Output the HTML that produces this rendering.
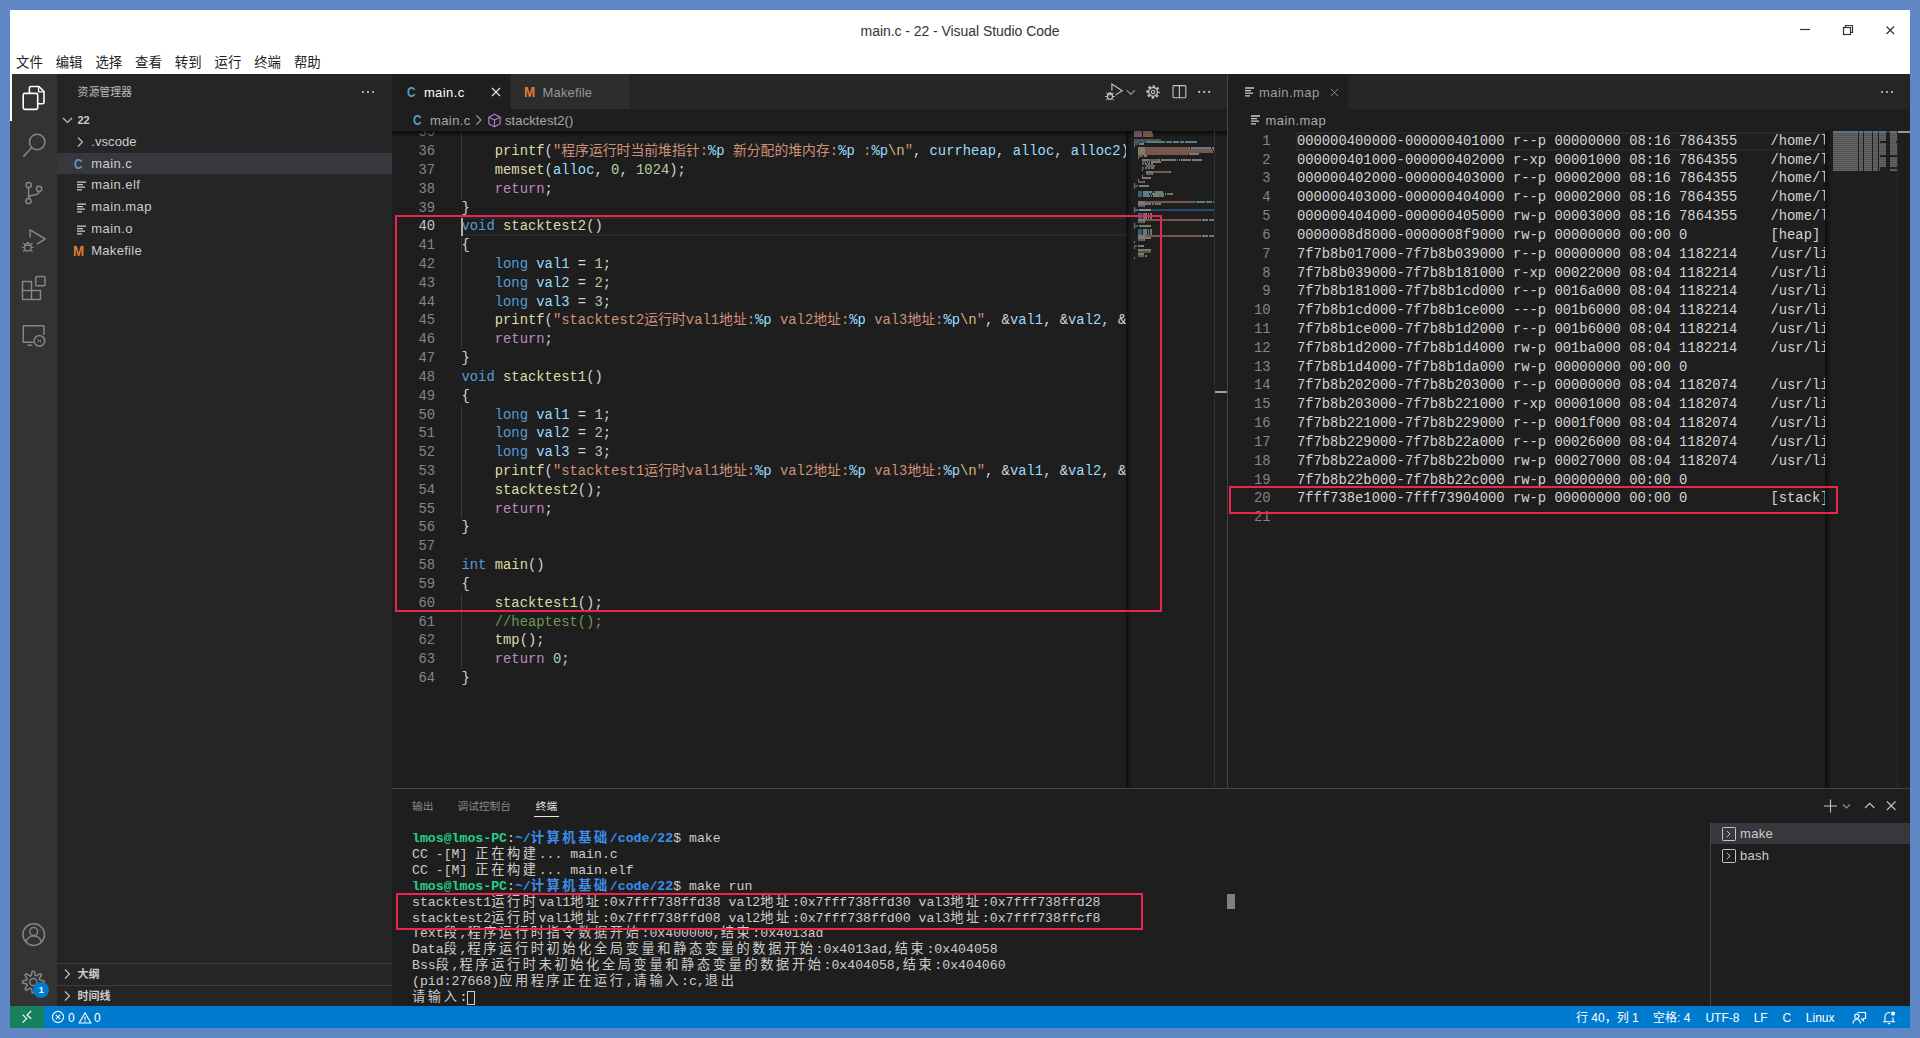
<!DOCTYPE html>
<html lang="zh-CN"><head><meta charset="utf-8"><title>main.c - 22 - Visual Studio Code</title>
<style>
*{box-sizing:border-box;margin:0;padding:0}
html,body{width:1920px;height:1038px;overflow:hidden;background:#5f87c5}
body{position:relative;font-family:"Liberation Sans","Noto Sans CJK SC",sans-serif;font-size:13px;color:#ccc}
.abs{position:absolute}
.t{position:absolute;white-space:pre;}
svg{position:absolute;overflow:visible}
.mono{font-family:"Liberation Mono","Noto Sans CJK SC",monospace}

.code{position:absolute;overflow:hidden;font-family:"Liberation Mono","Noto Sans CJK SC",monospace;font-size:13.85px;color:#d4d4d4}
.ln{position:absolute;white-space:pre;height:18.82px;line-height:18.82px}
.num{color:#858585;text-align:right}

.term{position:absolute;white-space:pre;font-family:"Liberation Mono","Noto Sans CJK SC",monospace;font-size:13.2px;line-height:15.85px;height:15.85px;color:#cccccc;left:412px}
.term .k{letter-spacing:2.64px}
.g{color:#23d18b;font-weight:bold} .b{color:#3b8eea;font-weight:bold}
</style></head>
<body>
<div class="abs" style="left:10px;top:10px;width:1900px;height:64px;background:#ffffff;"></div>
<div class="t " style="left:960px;top:20.70px;line-height:20px;font-size:14px;color:#333;letter-spacing:-0.05px;transform:translateX(-50%);">main.c - 22 - Visual Studio Code</div>
<svg style="left:1790px;top:20px" width="120" height="22" viewBox="0 0 120 22" fill="none" stroke="#333" stroke-width="1.2"><path d="M10 9.5h10"/><rect x="53.5" y="7.5" width="7" height="7"/><path d="M55.5 7.5v-2h7v7h-2"/><path d="M96.5 6.5l7.5 7.5M104 6.5l-7.5 7.5"/></svg>
<div class="t " style="left:16.0px;top:52.60px;line-height:20px;font-size:13.4px;color:#222;">文件</div>
<div class="t " style="left:55.7px;top:52.60px;line-height:20px;font-size:13.4px;color:#222;">编辑</div>
<div class="t " style="left:95.4px;top:52.60px;line-height:20px;font-size:13.4px;color:#222;">选择</div>
<div class="t " style="left:135.10000000000002px;top:52.60px;line-height:20px;font-size:13.4px;color:#222;">查看</div>
<div class="t " style="left:174.8px;top:52.60px;line-height:20px;font-size:13.4px;color:#222;">转到</div>
<div class="t " style="left:214.5px;top:52.60px;line-height:20px;font-size:13.4px;color:#222;">运行</div>
<div class="t " style="left:254.20000000000002px;top:52.60px;line-height:20px;font-size:13.4px;color:#222;">终端</div>
<div class="t " style="left:293.90000000000003px;top:52.60px;line-height:20px;font-size:13.4px;color:#222;">帮助</div>
<div class="abs" style="left:10px;top:74px;width:47px;height:932px;background:#333333;"></div>
<div class="abs" style="left:10px;top:74px;width:2px;height:47px;background:#ffffff;"></div>
<div class="abs" style="left:57px;top:74px;width:335px;height:932px;background:#252526;"></div>
<div class="t " style="left:77.5px;top:81.70px;line-height:20px;font-size:10.9px;color:#bbbbbb;">资源管理器</div>
<svg style="left:361px;top:90px" width="14" height="4" viewBox="0 0 14 4" fill="#c5c5c5"><circle cx="2" cy="2" r="1.1"/><circle cx="7" cy="2" r="1.1"/><circle cx="12" cy="2" r="1.1"/></svg>
<svg style="left:59.5px;top:112px" width="16" height="16" viewBox="0 0 16 16" fill="none" stroke="#c5c5c5" stroke-width="1.1"><path d="M3 6l4.5 4.5L12 6"/></svg>
<div class="t " style="left:77.5px;top:109.80px;line-height:20px;font-size:11px;color:#cccccc;font-weight:bold;">22</div>
<div class="abs" style="left:57px;top:152.5px;width:335px;height:21.6px;background:#37373d;"></div>
<svg style="left:72px;top:133.8px" width="16" height="16" viewBox="0 0 16 16" fill="none" stroke="#c5c5c5" stroke-width="1.1"><path d="M6 3.5l4.500 4.500L6 12.500"/></svg>
<div class="t " style="left:91.2px;top:131.80px;line-height:20px;font-size:13px;color:#cccccc;letter-spacing:0.1px;">.vscode</div>
<div class="t " style="left:74.4px;top:153.60px;line-height:20px;font-size:14.5px;color:#519aba;font-weight:bold;transform:scaleX(.82);transform-origin:0 50%;">C</div>
<div class="t " style="left:91.2px;top:153.60px;line-height:20px;font-size:13px;color:#cccccc;letter-spacing:0.45px;">main.c</div>
<svg style="left:76.2px;top:179.9px" width="12" height="12" viewBox="0 0 12 12" fill="none" stroke="#c9cccb" stroke-width="1.25"><path d="M1 2h9M1 4.600h6M1 7.200h8M1 9.800h5"/></svg>
<div class="t " style="left:91.2px;top:175.40px;line-height:20px;font-size:13px;color:#cccccc;letter-spacing:0.45px;">main.elf</div>
<svg style="left:76.2px;top:201.70000000000002px" width="12" height="12" viewBox="0 0 12 12" fill="none" stroke="#c9cccb" stroke-width="1.25"><path d="M1 2h9M1 4.600h6M1 7.200h8M1 9.800h5"/></svg>
<div class="t " style="left:91.2px;top:197.20px;line-height:20px;font-size:13px;color:#cccccc;letter-spacing:0.45px;">main.map</div>
<svg style="left:76.2px;top:223.5px" width="12" height="12" viewBox="0 0 12 12" fill="none" stroke="#c9cccb" stroke-width="1.25"><path d="M1 2h9M1 4.600h6M1 7.200h8M1 9.800h5"/></svg>
<div class="t " style="left:91.2px;top:219.00px;line-height:20px;font-size:13px;color:#cccccc;letter-spacing:0.45px;">main.o</div>
<div class="t " style="left:72.7px;top:240.80px;line-height:20px;font-size:14.5px;color:#e37933;font-weight:bold;transform:scaleX(.92);transform-origin:0 50%;">M</div>
<div class="t " style="left:91.2px;top:240.80px;line-height:20px;font-size:13px;color:#cccccc;letter-spacing:0.3px;">Makefile</div>
<div class="abs" style="left:57px;top:962.5px;width:335px;height:1px;background:#3c3c3c;"></div>
<div class="abs" style="left:57px;top:984.5px;width:335px;height:1px;background:#3c3c3c;"></div>
<svg style="left:59px;top:965.8px" width="16" height="16" viewBox="0 0 16 16" fill="none" stroke="#c5c5c5" stroke-width="1.1"><path d="M6 3.5l4.5 4.5L6 12.5"/></svg>
<div class="t " style="left:77.5px;top:963.80px;line-height:20px;font-size:11px;color:#cccccc;font-weight:bold;">大纲</div>
<svg style="left:59px;top:987.6px" width="16" height="16" viewBox="0 0 16 16" fill="none" stroke="#c5c5c5" stroke-width="1.1"><path d="M6 3.5l4.5 4.5L6 12.5"/></svg>
<div class="t " style="left:77.5px;top:985.60px;line-height:20px;font-size:11px;color:#cccccc;font-weight:bold;">时间线</div>
<div class="abs" style="left:10px;top:1006px;width:1900px;height:22px;background:#007acc;"></div>
<div class="abs" style="left:10px;top:1006px;width:33.5px;height:22px;background:#16825d;"></div>
<svg style="left:10px;top:1006px" width="34" height="22" viewBox="0 0 34 22" fill="none" stroke="#fff" stroke-width="1.2"><path d="M12.600 8.600l4 4-4 4"/><path d="M21.200 4.900l-4 4 4 4"/></svg>
<svg style="left:51.300px;top:1010px" width="14" height="14" viewBox="0 0 14 14" fill="none" stroke="#fff" stroke-width="1.1"><circle cx="7" cy="7" r="5.6"/><path d="M4.8 4.8l4.4 4.4M9.2 4.8l-4.4 4.4"/></svg>
<div class="t " style="left:68px;top:1007.60px;line-height:20px;font-size:12px;color:#fff;">0</div>
<svg style="left:78px;top:1010.5px" width="14" height="14" viewBox="0 0 14 14" fill="none" stroke="#fff" stroke-width="1.1"><path d="M7 1.8L12.8 12H1.2z"/><path d="M7 5.5v3.4M7 10v1"/></svg>
<div class="t " style="left:94px;top:1007.60px;line-height:20px;font-size:12px;color:#fff;">0</div>
<div class="t " style="left:1576px;top:1007.60px;line-height:20px;font-size:12px;color:#fff;">行 40，列 1</div>
<div class="t " style="left:1653px;top:1007.60px;line-height:20px;font-size:12px;color:#fff;">空格: 4</div>
<div class="t " style="left:1705.4px;top:1007.60px;line-height:20px;font-size:12px;color:#fff;">UTF-8</div>
<div class="t " style="left:1753.7px;top:1007.60px;line-height:20px;font-size:12px;color:#fff;">LF</div>
<div class="t " style="left:1782.5px;top:1007.60px;line-height:20px;font-size:12px;color:#fff;">C</div>
<div class="t " style="left:1805.8px;top:1007.60px;line-height:20px;font-size:12px;color:#fff;">Linux</div>
<svg style="left:1852px;top:1010px" width="15" height="15" viewBox="0 0 15 15" fill="none" stroke="#fff" stroke-width="1.1"><path d="M5.5 2.5h8v6h-2v2.2l-2.4-2.2"/><circle cx="4.8" cy="6.2" r="2.1"/><path d="M1 13.5c.3-3 1.8-4.3 3.8-4.3s3.5 1.3 3.8 4.3"/></svg>
<svg style="left:1882px;top:1010px" width="15" height="15" viewBox="0 0 15 15" fill="none" stroke="#fff" stroke-width="1.1"><path d="M3 10.5V6.5a4 4 0 0 1 5-3.9M11 7.5v3l1.2 1.3H1.8L3 10.5M6 13.2c.5.8 1.5.8 2 0"/><circle cx="11" cy="3.6" r="2.1" fill="#fff" stroke="none"/></svg>
<svg style="left:10px;top:74px" width="47" height="932" viewBox="0 0 47 932" fill="none" stroke-width="1.6" stroke-linejoin="round" stroke-linecap="butt"><g stroke="#ffffff"><path d="M19.400 19.400V14a1.500 1.500 0 0 1 1.500-1.500h8l5.100 5.100V28.300a1.500 1.500 0 0 1-1.500 1.500H27.700"/><path d="M28.600 12.800v5.100h5.100" stroke-width="1.300"/><rect x="13.200" y="19.400" width="14.500" height="16" rx="1.600"/></g><g stroke="#858585"><circle cx="27.200" cy="68" r="7.700"/><path d="M21.600 73.800L13.400 82.600"/></g><g stroke="#858585" stroke-width="1.500"><circle cx="18.700" cy="111" r="2.600"/><circle cx="29.100" cy="114.800" r="2.600"/><circle cx="18.500" cy="127" r="2.600"/><path d="M18.600 113.600V124.400M29.100 117.400c0 5.200-10.400 2.200-10.500 6.800"/></g><g stroke="#858585" stroke-width="1.500"><path d="M20.100 163.500V155.800L35.200 165 26.800 170.200"/><ellipse cx="17.800" cy="173.200" rx="3.300" ry="4"/><path d="M14.800 171.300h6M17.800 169.200v-1.500M14.500 173.500h-2.600M21.100 173.500h2.600M14.900 170.600l-2-1.700M20.700 170.600l2-1.700M15 176l-2 1.700M20.600 176l2 1.700" stroke-width="1.200"/></g><g stroke="#858585" stroke-width="1.500"><path d="M12.500 207.400h9v9h9v9h-18zM12.500 216.400h9M21.500 216.400v9"/><rect x="25.700" y="202.400" width="9.300" height="9.300" rx="1"/></g><g stroke="#858585" stroke-width="1.500"><path d="M23.500 268.300H13.300V251.700H33.900V261"/><path d="M17.400 271.200h4.800"/><circle cx="29.400" cy="266.900" r="5.300"/><path d="M27.600 268.200l1.500-1.400-1.500-1.400M31.200 265.500l-1.500 1.400 1.500 1.400" stroke-width="1"/></g><g stroke="#858585" stroke-width="1.500"><circle cx="23.700" cy="860.600" r="10.800"/><circle cx="23.700" cy="857.600" r="4"/><path d="M16 868c1.200-4 4-6 7.700-6s6.500 2 7.700 6"/></g><g stroke="#858585" stroke-width="1.250" transform="translate(8.900,893.600) scale(1.2)"><path d="M13.650 6.600L12.900 3H11.100l-.750 3.600-1.050.450-3-1.950-1.350 1.200 1.950 3-.300 1.050-3.600.750v1.800l3.600.750.450 1.200-1.950 3 1.200 1.200 3-1.950 1.200.450.600 3.450h1.800l.750-3.600 1.200-.450 3 1.950 1.200-1.200-1.950-3 .450-1.200 3.450-.600V11.100l-3.600-.750-.450-1.200 1.950-3-1.200-1.200-3 1.950-1.050-.300z"/><circle cx="12" cy="12" r="3"/></g></svg>
<div class="abs" style="left:33.2px;top:982.4px;width:16px;height:16px;border-radius:8px;background:#007acc"></div>
<div class="t " style="left:41.2px;top:980.40px;line-height:20px;font-size:9px;color:#fff;font-weight:bold;transform:translateX(-50%);">1</div>
<div class="abs" style="left:392px;top:74px;width:1518px;height:714px;background:#1e1e1e;"></div>
<div class="abs" style="left:392px;top:74px;width:835px;height:35px;background:#252526;"></div>
<div class="abs" style="left:392px;top:74px;width:118px;height:35px;background:#1e1e1e;"></div>
<div class="abs" style="left:511px;top:74px;width:117.5px;height:35px;background:#2d2d2d;"></div>
<div class="t " style="left:407.4px;top:82.30px;line-height:20px;font-size:14.5px;color:#519aba;font-weight:bold;transform:scaleX(.82);transform-origin:0 50%;">C</div>
<div class="t " style="left:423.9px;top:82.90px;line-height:20px;font-size:13px;color:#ffffff;letter-spacing:0.4px;">main.c</div>
<svg style="left:491px;top:86.500px" width="10" height="10" viewBox="0 0 10 10" fill="none" stroke="#e8e8e8" stroke-width="1.1"><path d="M1 1l8 8M9 1l-8 8"/></svg>
<div class="t " style="left:524.2px;top:82.30px;line-height:20px;font-size:14.5px;color:#e37933;font-weight:bold;transform:scaleX(.92);transform-origin:0 50%;">M</div>
<div class="t " style="left:542.6px;top:82.90px;line-height:20px;font-size:13px;color:#969696;letter-spacing:0.15px;">Makefile</div>
<svg style="left:1090px;top:74px" width="137" height="35" viewBox="0 0 137 35" fill="none" stroke="#c5c5c5" stroke-width="1.1"><path d="M21.900 16.800V10l10.300 6.800-6.900 4.300"/><ellipse cx="20" cy="22.300" rx="2.500" ry="3.100" stroke-width="1.200"/><path d="M17.500 20.700h5M20 19.200v-1.300M17.500 22.500h-2.300M22.500 22.500h2.300M17.900 20.200l-1.700-1.500M22.100 20.200l1.700-1.500M17.900 24.500l-1.700 1.500M22.100 24.500l1.700 1.500" stroke-width="1"/><path d="M36.700 16.300l4.100 3.900 4.100-3.900" stroke="#9d9d9d"/><g transform="translate(63.100,17.900)"><circle r="5.900" stroke-width="1.700" stroke-dasharray="2.317 2.317" stroke-dashoffset="1.158"/><circle r="4.400" stroke-width="1.300"/><circle r="1.700" stroke-width="1.100"/></g><rect x="83" y="11.600" width="12.800" height="12.200" rx="1"/><path d="M89.400 11.600v12.200"/><g fill="#c5c5c5" stroke="none"><circle cx="109.200" cy="17.900" r="1.100"/><circle cx="114.200" cy="17.900" r="1.100"/><circle cx="119.200" cy="17.900" r="1.100"/></g></svg>
<div class="t " style="left:413.2px;top:110.30px;line-height:20px;font-size:14.5px;color:#519aba;font-weight:bold;transform:scaleX(.82);transform-origin:0 50%;">C</div>
<div class="t " style="left:430px;top:110.80px;line-height:20px;font-size:13px;color:#a9a9a9;letter-spacing:0.4px;">main.c</div>
<svg style="left:470.800px;top:111.500px" width="16" height="16" viewBox="0 0 16 16" fill="none" stroke="#a0a0a0" stroke-width="1.1"><path d="M5.5 3.5l4.5 4.5-4.5 4.5"/></svg>
<svg style="left:487px;top:112.5px" width="15" height="15" viewBox="0 0 15 15" fill="none" stroke="#b180d7" stroke-width="1.1" stroke-linejoin="round"><path d="M7.5 1.3l5.7 2.9v6.6l-5.7 2.9-5.7-2.900V4.2z"/><path d="M1.800 4.2l5.7 2.900 5.700-2.900M7.5 7.100v6.600"/></svg>
<div class="t " style="left:505px;top:110.80px;line-height:20px;font-size:13px;color:#a9a9a9;letter-spacing:0.1px;">stacktest2()</div>
<div class="code" style="left:392px;top:131px;width:734px;height:657px">
<div class="abs" style="left:69.0px;top:86.37px;width:700px;height:18.82px;border:2px solid #282828"></div>
<div class="abs" style="left:68.5px;top:-7.73px;width:1px;height:75.28px;background:#3b3b3b"></div>
<div class="abs" style="left:68.5px;top:105.19px;width:1px;height:112.92px;background:#3b3b3b"></div>
<div class="abs" style="left:68.5px;top:274.57px;width:1px;height:112.92px;background:#3b3b3b"></div>
<div class="abs" style="left:68.5px;top:462.77px;width:1px;height:75.28px;background:#3b3b3b"></div>
<div class="ln num" style="left:0;width:43px;top:-7.73px;color:#858585">35</div>
<div class="ln num" style="left:0;width:43px;top:11.09px;color:#858585">36</div>
<div class="ln" style="left:69.5px;top:11.09px">    <span style="color:#dcdcaa">printf</span>(<span style="color:#ce9178">"程序运行时当前堆指针:</span><span style="color:#9cdcfe">%p</span><span style="color:#ce9178"> 新分配的堆内存:</span><span style="color:#9cdcfe">%p</span><span style="color:#ce9178"> :</span><span style="color:#9cdcfe">%p</span><span style="color:#d7ba7d">\n</span><span style="color:#ce9178">"</span>, <span style="color:#9cdcfe">currheap</span>, <span style="color:#9cdcfe">alloc</span>, <span style="color:#9cdcfe">alloc2</span>);</div>
<div class="ln num" style="left:0;width:43px;top:29.91px;color:#858585">37</div>
<div class="ln" style="left:69.5px;top:29.91px">    <span style="color:#dcdcaa">memset</span>(<span style="color:#9cdcfe">alloc</span>, <span style="color:#b5cea8">0</span>, <span style="color:#b5cea8">1024</span>);</div>
<div class="ln num" style="left:0;width:43px;top:48.73px;color:#858585">38</div>
<div class="ln" style="left:69.5px;top:48.73px">    <span style="color:#c586c0">return</span>;</div>
<div class="ln num" style="left:0;width:43px;top:67.55px;color:#858585">39</div>
<div class="ln" style="left:69.5px;top:67.55px">}</div>
<div class="ln num" style="left:0;width:43px;top:86.37px;color:#c6c6c6">40</div>
<div class="ln" style="left:69.5px;top:86.37px"><span style="color:#569cd6">void</span> <span style="color:#dcdcaa">stacktest2</span>()</div>
<div class="ln num" style="left:0;width:43px;top:105.19px;color:#858585">41</div>
<div class="ln" style="left:69.5px;top:105.19px">{</div>
<div class="ln num" style="left:0;width:43px;top:124.01px;color:#858585">42</div>
<div class="ln" style="left:69.5px;top:124.01px">    <span style="color:#569cd6">long</span> <span style="color:#9cdcfe">val1</span> = <span style="color:#b5cea8">1</span>;</div>
<div class="ln num" style="left:0;width:43px;top:142.83px;color:#858585">43</div>
<div class="ln" style="left:69.5px;top:142.83px">    <span style="color:#569cd6">long</span> <span style="color:#9cdcfe">val2</span> = <span style="color:#b5cea8">2</span>;</div>
<div class="ln num" style="left:0;width:43px;top:161.65px;color:#858585">44</div>
<div class="ln" style="left:69.5px;top:161.65px">    <span style="color:#569cd6">long</span> <span style="color:#9cdcfe">val3</span> = <span style="color:#b5cea8">3</span>;</div>
<div class="ln num" style="left:0;width:43px;top:180.47px;color:#858585">45</div>
<div class="ln" style="left:69.5px;top:180.47px">    <span style="color:#dcdcaa">printf</span>(<span style="color:#ce9178">"stacktest2运行时val1地址:</span><span style="color:#9cdcfe">%p</span><span style="color:#ce9178"> val2地址:</span><span style="color:#9cdcfe">%p</span><span style="color:#ce9178"> val3地址:</span><span style="color:#9cdcfe">%p</span><span style="color:#d7ba7d">\n</span><span style="color:#ce9178">"</span>, &amp;<span style="color:#9cdcfe">val1</span>, &amp;<span style="color:#9cdcfe">val2</span>, &amp;<span style="color:#9cdcfe">val3</span>);</div>
<div class="ln num" style="left:0;width:43px;top:199.29px;color:#858585">46</div>
<div class="ln" style="left:69.5px;top:199.29px">    <span style="color:#c586c0">return</span>;</div>
<div class="ln num" style="left:0;width:43px;top:218.11px;color:#858585">47</div>
<div class="ln" style="left:69.5px;top:218.11px">}</div>
<div class="ln num" style="left:0;width:43px;top:236.93px;color:#858585">48</div>
<div class="ln" style="left:69.5px;top:236.93px"><span style="color:#569cd6">void</span> <span style="color:#dcdcaa">stacktest1</span>()</div>
<div class="ln num" style="left:0;width:43px;top:255.75px;color:#858585">49</div>
<div class="ln" style="left:69.5px;top:255.75px">{</div>
<div class="ln num" style="left:0;width:43px;top:274.57px;color:#858585">50</div>
<div class="ln" style="left:69.5px;top:274.57px">    <span style="color:#569cd6">long</span> <span style="color:#9cdcfe">val1</span> = <span style="color:#b5cea8">1</span>;</div>
<div class="ln num" style="left:0;width:43px;top:293.39px;color:#858585">51</div>
<div class="ln" style="left:69.5px;top:293.39px">    <span style="color:#569cd6">long</span> <span style="color:#9cdcfe">val2</span> = <span style="color:#b5cea8">2</span>;</div>
<div class="ln num" style="left:0;width:43px;top:312.21px;color:#858585">52</div>
<div class="ln" style="left:69.5px;top:312.21px">    <span style="color:#569cd6">long</span> <span style="color:#9cdcfe">val3</span> = <span style="color:#b5cea8">3</span>;</div>
<div class="ln num" style="left:0;width:43px;top:331.03px;color:#858585">53</div>
<div class="ln" style="left:69.5px;top:331.03px">    <span style="color:#dcdcaa">printf</span>(<span style="color:#ce9178">"stacktest1运行时val1地址:</span><span style="color:#9cdcfe">%p</span><span style="color:#ce9178"> val2地址:</span><span style="color:#9cdcfe">%p</span><span style="color:#ce9178"> val3地址:</span><span style="color:#9cdcfe">%p</span><span style="color:#d7ba7d">\n</span><span style="color:#ce9178">"</span>, &amp;<span style="color:#9cdcfe">val1</span>, &amp;<span style="color:#9cdcfe">val2</span>, &amp;<span style="color:#9cdcfe">val3</span>);</div>
<div class="ln num" style="left:0;width:43px;top:349.85px;color:#858585">54</div>
<div class="ln" style="left:69.5px;top:349.85px">    <span style="color:#dcdcaa">stacktest2</span>();</div>
<div class="ln num" style="left:0;width:43px;top:368.67px;color:#858585">55</div>
<div class="ln" style="left:69.5px;top:368.67px">    <span style="color:#c586c0">return</span>;</div>
<div class="ln num" style="left:0;width:43px;top:387.49px;color:#858585">56</div>
<div class="ln" style="left:69.5px;top:387.49px">}</div>
<div class="ln num" style="left:0;width:43px;top:406.31px;color:#858585">57</div>
<div class="ln num" style="left:0;width:43px;top:425.13px;color:#858585">58</div>
<div class="ln" style="left:69.5px;top:425.13px"><span style="color:#569cd6">int</span> <span style="color:#dcdcaa">main</span>()</div>
<div class="ln num" style="left:0;width:43px;top:443.95px;color:#858585">59</div>
<div class="ln" style="left:69.5px;top:443.95px">{</div>
<div class="ln num" style="left:0;width:43px;top:462.77px;color:#858585">60</div>
<div class="ln" style="left:69.5px;top:462.77px">    <span style="color:#dcdcaa">stacktest1</span>();</div>
<div class="ln num" style="left:0;width:43px;top:481.59px;color:#858585">61</div>
<div class="ln" style="left:69.5px;top:481.59px">    <span style="color:#6a9955">//heaptest();</span></div>
<div class="ln num" style="left:0;width:43px;top:500.41px;color:#858585">62</div>
<div class="ln" style="left:69.5px;top:500.41px">    <span style="color:#dcdcaa">tmp</span>();</div>
<div class="ln num" style="left:0;width:43px;top:519.23px;color:#858585">63</div>
<div class="ln" style="left:69.5px;top:519.23px">    <span style="color:#c586c0">return</span> <span style="color:#b5cea8">0</span>;</div>
<div class="ln num" style="left:0;width:43px;top:538.05px;color:#858585">64</div>
<div class="ln" style="left:69.5px;top:538.05px">}</div>
<div class="abs" style="left:69.0px;top:86.87px;width:2px;height:17.82px;background:#aeafad"></div>
</div>
<div class="abs" style="left:392px;top:131px;width:835px;height:6px;background:linear-gradient(#000a,#0000)"></div>
<div class="abs" style="left:1126px;top:131px;width:6px;height:657px;background:linear-gradient(90deg,#0008,#0000)"></div>
<div class="abs" style="left:1214px;top:131px;width:1px;height:657px;background:#303030;"></div>
<div class="abs" style="left:1215px;top:390.5px;width:12px;height:2.5px;background:#a0a0a0;"></div>
<div class="abs" style="left:1227px;top:74px;width:1px;height:714px;background:#444444;"></div>
<div class="abs" style="left:1228px;top:74px;width:682px;height:35px;background:#252526;"></div>
<div class="abs" style="left:1228px;top:74px;width:119.5px;height:35px;background:#1e1e1e;"></div>
<svg style="left:1244px;top:86px" width="12" height="12" viewBox="0 0 12 12" fill="none" stroke="#c8cbca" stroke-width="1.3"><path d="M1 2h9M1 4.600h6M1 7.200h8M1 9.800h5"/></svg>
<div class="t " style="left:1259px;top:82.80px;line-height:20px;font-size:13px;color:#9d9d9d;letter-spacing:0.45px;">main.map</div>
<svg style="left:1330px;top:87.5px" width="9" height="9" viewBox="0 0 10 10" fill="none" stroke="#8a8a8a" stroke-width="1.1"><path d="M1 1l8 8M9 1l-8 8"/></svg>
<svg style="left:1880px;top:90px" width="14" height="4" viewBox="0 0 14 4" fill="#c5c5c5"><circle cx="2" cy="2" r="1.1"/><circle cx="7" cy="2" r="1.1"/><circle cx="12" cy="2" r="1.1"/></svg>
<svg style="left:1250px;top:114px" width="12" height="12" viewBox="0 0 12 12" fill="none" stroke="#c8cbca" stroke-width="1.3"><path d="M1 2h9M1 4.600h6M1 7.200h8M1 9.800h5"/></svg>
<div class="t " style="left:1265.5px;top:110.80px;line-height:20px;font-size:13px;color:#a9a9a9;letter-spacing:0.45px;">main.map</div>
<div class="code" style="left:1228px;top:131px;width:596.5px;height:657px;color:#d4d4d4">
<div class="abs" style="left:68.40000000000009px;top:0.79px;width:700px;height:18.82px;border:2px solid #282828"></div>
<div class="ln num" style="left:0;width:42.5px;top:0.79px">1</div>
<div class="ln" style="left:68.90000000000009px;top:0.79px">000000400000-000000401000 r--p 00000000 08:16 7864355    /home/lmos/计算机基础/code/22/main.elf</div>
<div class="ln num" style="left:0;width:42.5px;top:19.61px">2</div>
<div class="ln" style="left:68.90000000000009px;top:19.61px">000000401000-000000402000 r-xp 00001000 08:16 7864355    /home/lmos/计算机基础/code/22/main.elf</div>
<div class="ln num" style="left:0;width:42.5px;top:38.43px">3</div>
<div class="ln" style="left:68.90000000000009px;top:38.43px">000000402000-000000403000 r--p 00002000 08:16 7864355    /home/lmos/计算机基础/code/22/main.elf</div>
<div class="ln num" style="left:0;width:42.5px;top:57.25px">4</div>
<div class="ln" style="left:68.90000000000009px;top:57.25px">000000403000-000000404000 r--p 00002000 08:16 7864355    /home/lmos/计算机基础/code/22/main.elf</div>
<div class="ln num" style="left:0;width:42.5px;top:76.07px">5</div>
<div class="ln" style="left:68.90000000000009px;top:76.07px">000000404000-000000405000 rw-p 00003000 08:16 7864355    /home/lmos/计算机基础/code/22/main.elf</div>
<div class="ln num" style="left:0;width:42.5px;top:94.89px">6</div>
<div class="ln" style="left:68.90000000000009px;top:94.89px">0000008d8000-0000008f9000 rw-p 00000000 00:00 0          [heap]</div>
<div class="ln num" style="left:0;width:42.5px;top:113.71px">7</div>
<div class="ln" style="left:68.90000000000009px;top:113.71px">7f7b8b017000-7f7b8b039000 r--p 00000000 08:04 1182214    /usr/lib/x86_64-linux-gnu/libc-2.28.so</div>
<div class="ln num" style="left:0;width:42.5px;top:132.53px">8</div>
<div class="ln" style="left:68.90000000000009px;top:132.53px">7f7b8b039000-7f7b8b181000 r-xp 00022000 08:04 1182214    /usr/lib/x86_64-linux-gnu/libc-2.28.so</div>
<div class="ln num" style="left:0;width:42.5px;top:151.35px">9</div>
<div class="ln" style="left:68.90000000000009px;top:151.35px">7f7b8b181000-7f7b8b1cd000 r--p 0016a000 08:04 1182214    /usr/lib/x86_64-linux-gnu/libc-2.28.so</div>
<div class="ln num" style="left:0;width:42.5px;top:170.17px">10</div>
<div class="ln" style="left:68.90000000000009px;top:170.17px">7f7b8b1cd000-7f7b8b1ce000 ---p 001b6000 08:04 1182214    /usr/lib/x86_64-linux-gnu/libc-2.28.so</div>
<div class="ln num" style="left:0;width:42.5px;top:188.99px">11</div>
<div class="ln" style="left:68.90000000000009px;top:188.99px">7f7b8b1ce000-7f7b8b1d2000 r--p 001b6000 08:04 1182214    /usr/lib/x86_64-linux-gnu/libc-2.28.so</div>
<div class="ln num" style="left:0;width:42.5px;top:207.81px">12</div>
<div class="ln" style="left:68.90000000000009px;top:207.81px">7f7b8b1d2000-7f7b8b1d4000 rw-p 001ba000 08:04 1182214    /usr/lib/x86_64-linux-gnu/libc-2.28.so</div>
<div class="ln num" style="left:0;width:42.5px;top:226.63px">13</div>
<div class="ln" style="left:68.90000000000009px;top:226.63px">7f7b8b1d4000-7f7b8b1da000 rw-p 00000000 00:00 0</div>
<div class="ln num" style="left:0;width:42.5px;top:245.45px">14</div>
<div class="ln" style="left:68.90000000000009px;top:245.45px">7f7b8b202000-7f7b8b203000 r--p 00000000 08:04 1182074    /usr/lib/x86_64-linux-gnu/ld-2.28.so</div>
<div class="ln num" style="left:0;width:42.5px;top:264.27px">15</div>
<div class="ln" style="left:68.90000000000009px;top:264.27px">7f7b8b203000-7f7b8b221000 r-xp 00001000 08:04 1182074    /usr/lib/x86_64-linux-gnu/ld-2.28.so</div>
<div class="ln num" style="left:0;width:42.5px;top:283.09px">16</div>
<div class="ln" style="left:68.90000000000009px;top:283.09px">7f7b8b221000-7f7b8b229000 r--p 0001f000 08:04 1182074    /usr/lib/x86_64-linux-gnu/ld-2.28.so</div>
<div class="ln num" style="left:0;width:42.5px;top:301.91px">17</div>
<div class="ln" style="left:68.90000000000009px;top:301.91px">7f7b8b229000-7f7b8b22a000 r--p 00026000 08:04 1182074    /usr/lib/x86_64-linux-gnu/ld-2.28.so</div>
<div class="ln num" style="left:0;width:42.5px;top:320.73px">18</div>
<div class="ln" style="left:68.90000000000009px;top:320.73px">7f7b8b22a000-7f7b8b22b000 rw-p 00027000 08:04 1182074    /usr/lib/x86_64-linux-gnu/ld-2.28.so</div>
<div class="ln num" style="left:0;width:42.5px;top:339.55px">19</div>
<div class="ln" style="left:68.90000000000009px;top:339.55px">7f7b8b22b000-7f7b8b22c000 rw-p 00000000 00:00 0</div>
<div class="ln num" style="left:0;width:42.5px;top:358.37px">20</div>
<div class="ln" style="left:68.90000000000009px;top:358.37px">7fff738e1000-7fff73904000 rw-p 00000000 00:00 0          [stack]</div>
<div class="ln num" style="left:0;width:42.5px;top:377.19px">21</div>
</div>
<div class="abs" style="left:1824.500px;top:131px;width:6px;height:657px;background:linear-gradient(90deg,#0008,#0000)"></div>
<div class="abs" style="left:1896.5px;top:131px;width:1px;height:657px;background:#2c2c2c;"></div>
<div class="abs" style="left:1897.5px;top:131px;width:12.5px;height:1.5px;background:#9a9a9a;"></div>
<svg style="left:1134px;top:131px" width="80" height="140" viewBox="0 0 80 140" shape-rendering="crispEdges"><rect x="0" y="78" width="80" height="2" fill="#264f78" opacity=".9"/><g opacity=".5"><rect x="0" y="0.4" width="8" height="1.3" fill="#c586c0"/><rect x="9" y="0.4" width="9" height="1.3" fill="#ce9178"/><rect x="0" y="2.4" width="8" height="1.3" fill="#c586c0"/><rect x="9" y="2.4" width="10" height="1.3" fill="#ce9178"/><rect x="0" y="4.4" width="8" height="1.3" fill="#c586c0"/><rect x="9" y="4.4" width="10" height="1.3" fill="#ce9178"/><rect x="0" y="8.4" width="27" height="1.3" fill="#6a9955"/><rect x="0" y="10.4" width="6" height="1.3" fill="#569cd6"/><rect x="7" y="10.4" width="4" height="1.3" fill="#569cd6"/><rect x="12" y="10.4" width="18" height="1.3" fill="#9cdcfe"/><rect x="30" y="10.4" width="1" height="1.3" fill="#d4d4d4"/><rect x="32" y="10.4" width="5" height="1.3" fill="#9cdcfe"/><rect x="37" y="10.4" width="1" height="1.3" fill="#d4d4d4"/><rect x="39" y="10.4" width="5" height="1.3" fill="#9cdcfe"/><rect x="44" y="10.4" width="1" height="1.3" fill="#d4d4d4"/><rect x="46" y="10.4" width="3" height="1.3" fill="#9cdcfe"/><rect x="49" y="10.4" width="1" height="1.3" fill="#d4d4d4"/><rect x="51" y="10.4" width="11" height="1.3" fill="#9cdcfe"/><rect x="62" y="10.4" width="1" height="1.3" fill="#d4d4d4"/><rect x="0" y="12.4" width="4" height="1.3" fill="#569cd6"/><rect x="5" y="12.4" width="3" height="1.3" fill="#dcdcaa"/><rect x="8" y="12.4" width="2" height="1.3" fill="#d4d4d4"/><rect x="0" y="14.4" width="1" height="1.3" fill="#d4d4d4"/><rect x="4" y="16.4" width="6" height="1.3" fill="#dcdcaa"/><rect x="10" y="16.4" width="1" height="1.3" fill="#d4d4d4"/><rect x="11" y="16.4" width="44" height="1.3" fill="#ce9178"/><rect x="55" y="16.4" width="1" height="1.3" fill="#d4d4d4"/><rect x="57" y="16.4" width="1" height="1.3" fill="#d4d4d4"/><rect x="58" y="16.4" width="18" height="1.3" fill="#9cdcfe"/><rect x="76" y="16.4" width="1" height="1.3" fill="#d4d4d4"/><rect x="78" y="16.4" width="1" height="1.3" fill="#d4d4d4"/><rect x="79" y="16.4" width="1" height="1.3" fill="#9cdcfe"/><rect x="4" y="18.4" width="6" height="1.3" fill="#dcdcaa"/><rect x="10" y="18.4" width="1" height="1.3" fill="#d4d4d4"/><rect x="11" y="18.4" width="66" height="1.3" fill="#ce9178"/><rect x="77" y="18.4" width="1" height="1.3" fill="#d4d4d4"/><rect x="79" y="18.4" width="1" height="1.3" fill="#d4d4d4"/><rect x="4" y="20.4" width="6" height="1.3" fill="#dcdcaa"/><rect x="10" y="20.4" width="1" height="1.3" fill="#d4d4d4"/><rect x="11" y="20.4" width="67" height="1.3" fill="#ce9178"/><rect x="78" y="20.4" width="1" height="1.3" fill="#d4d4d4"/><rect x="4" y="22.4" width="6" height="1.3" fill="#dcdcaa"/><rect x="10" y="22.4" width="1" height="1.3" fill="#d4d4d4"/><rect x="11" y="22.4" width="42" height="1.3" fill="#ce9178"/><rect x="53" y="22.4" width="1" height="1.3" fill="#d4d4d4"/><rect x="55" y="22.4" width="6" height="1.3" fill="#dcdcaa"/><rect x="61" y="22.4" width="4" height="1.3" fill="#d4d4d4"/><rect x="4" y="24.4" width="5" height="1.3" fill="#c586c0"/><rect x="10" y="24.4" width="1" height="1.3" fill="#d4d4d4"/><rect x="11" y="24.4" width="1" height="1.3" fill="#b5cea8"/><rect x="12" y="24.4" width="1" height="1.3" fill="#d4d4d4"/><rect x="4" y="26.4" width="1" height="1.3" fill="#d4d4d4"/><rect x="8" y="28.4" width="6" height="1.3" fill="#dcdcaa"/><rect x="14" y="28.4" width="1" height="1.3" fill="#d4d4d4"/><rect x="15" y="28.4" width="9" height="1.3" fill="#ce9178"/><rect x="24" y="28.4" width="2" height="1.3" fill="#d4d4d4"/><rect x="27" y="28.4" width="6" height="1.3" fill="#dcdcaa"/><rect x="33" y="28.4" width="1" height="1.3" fill="#d4d4d4"/><rect x="34" y="28.4" width="6" height="1.3" fill="#9cdcfe"/><rect x="40" y="28.4" width="2" height="1.3" fill="#d4d4d4"/><rect x="43" y="28.4" width="1" height="1.3" fill="#9cdcfe"/><rect x="45" y="28.4" width="1" height="1.3" fill="#d4d4d4"/><rect x="47" y="28.4" width="7" height="1.3" fill="#dcdcaa"/><rect x="54" y="28.4" width="3" height="1.3" fill="#d4d4d4"/><rect x="58" y="28.4" width="7" height="1.3" fill="#dcdcaa"/><rect x="65" y="28.4" width="3" height="1.3" fill="#d4d4d4"/><rect x="8" y="30.4" width="4" height="1.3" fill="#569cd6"/><rect x="13" y="30.4" width="1" height="1.3" fill="#9cdcfe"/><rect x="15" y="30.4" width="1" height="1.3" fill="#d4d4d4"/><rect x="17" y="30.4" width="7" height="1.3" fill="#dcdcaa"/><rect x="24" y="30.4" width="3" height="1.3" fill="#d4d4d4"/><rect x="8" y="32.4" width="2" height="1.3" fill="#c586c0"/><rect x="11" y="32.4" width="1" height="1.3" fill="#d4d4d4"/><rect x="12" y="32.4" width="1" height="1.3" fill="#9cdcfe"/><rect x="14" y="32.4" width="2" height="1.3" fill="#d4d4d4"/><rect x="17" y="32.4" width="1" height="1.3" fill="#b5cea8"/><rect x="18" y="32.4" width="1" height="1.3" fill="#d4d4d4"/><rect x="12" y="34.4" width="8" height="1.3" fill="#c586c0"/><rect x="20" y="34.4" width="1" height="1.3" fill="#d4d4d4"/><rect x="8" y="36.4" width="2" height="1.3" fill="#c586c0"/><rect x="11" y="36.4" width="1" height="1.3" fill="#d4d4d4"/><rect x="12" y="36.4" width="1" height="1.3" fill="#9cdcfe"/><rect x="14" y="36.4" width="2" height="1.3" fill="#d4d4d4"/><rect x="17" y="36.4" width="2" height="1.3" fill="#b5cea8"/><rect x="19" y="36.4" width="1" height="1.3" fill="#d4d4d4"/><rect x="8" y="38.4" width="1" height="1.3" fill="#d4d4d4"/><rect x="12" y="40.4" width="6" height="1.3" fill="#dcdcaa"/><rect x="18" y="40.4" width="1" height="1.3" fill="#d4d4d4"/><rect x="19" y="40.4" width="16" height="1.3" fill="#ce9178"/><rect x="35" y="40.4" width="2" height="1.3" fill="#d4d4d4"/><rect x="12" y="42.4" width="6" height="1.3" fill="#c586c0"/><rect x="18" y="42.4" width="1" height="1.3" fill="#d4d4d4"/><rect x="8" y="44.4" width="1" height="1.3" fill="#d4d4d4"/><rect x="8" y="46.4" width="5" height="1.3" fill="#dcdcaa"/><rect x="13" y="46.4" width="1" height="1.3" fill="#d4d4d4"/><rect x="14" y="46.4" width="1" height="1.3" fill="#b5cea8"/><rect x="15" y="46.4" width="2" height="1.3" fill="#d4d4d4"/><rect x="4" y="48.4" width="1" height="1.3" fill="#d4d4d4"/><rect x="4" y="50.4" width="6" height="1.3" fill="#c586c0"/><rect x="10" y="50.4" width="1" height="1.3" fill="#d4d4d4"/><rect x="0" y="52.4" width="1" height="1.3" fill="#d4d4d4"/><rect x="0" y="54.4" width="4" height="1.3" fill="#569cd6"/><rect x="5" y="54.4" width="8" height="1.3" fill="#dcdcaa"/><rect x="13" y="54.4" width="2" height="1.3" fill="#d4d4d4"/><rect x="0" y="56.4" width="1" height="1.3" fill="#d4d4d4"/><rect x="4" y="60.4" width="4" height="1.3" fill="#569cd6"/><rect x="9" y="60.4" width="1" height="1.3" fill="#d4d4d4"/><rect x="10" y="60.4" width="8" height="1.3" fill="#9cdcfe"/><rect x="19" y="60.4" width="1" height="1.3" fill="#d4d4d4"/><rect x="21" y="60.4" width="4" height="1.3" fill="#dcdcaa"/><rect x="25" y="60.4" width="1" height="1.3" fill="#d4d4d4"/><rect x="26" y="60.4" width="1" height="1.3" fill="#b5cea8"/><rect x="27" y="60.4" width="2" height="1.3" fill="#d4d4d4"/><rect x="4" y="62.4" width="4" height="1.3" fill="#569cd6"/><rect x="9" y="62.4" width="1" height="1.3" fill="#d4d4d4"/><rect x="10" y="62.4" width="5" height="1.3" fill="#9cdcfe"/><rect x="16" y="62.4" width="1" height="1.3" fill="#d4d4d4"/><rect x="18" y="62.4" width="3" height="1.3" fill="#dcdcaa"/><rect x="21" y="62.4" width="1" height="1.3" fill="#d4d4d4"/><rect x="22" y="62.4" width="8" height="1.3" fill="#9cdcfe"/><rect x="31" y="62.4" width="1" height="1.3" fill="#d4d4d4"/><rect x="33" y="62.4" width="4" height="1.3" fill="#b5cea8"/><rect x="37" y="62.4" width="2" height="1.3" fill="#d4d4d4"/><rect x="4" y="64.4" width="4" height="1.3" fill="#569cd6"/><rect x="9" y="64.4" width="1" height="1.3" fill="#d4d4d4"/><rect x="10" y="64.4" width="6" height="1.3" fill="#9cdcfe"/><rect x="17" y="64.4" width="1" height="1.3" fill="#d4d4d4"/><rect x="19" y="64.4" width="4" height="1.3" fill="#dcdcaa"/><rect x="23" y="64.4" width="1" height="1.3" fill="#d4d4d4"/><rect x="24" y="64.4" width="4" height="1.3" fill="#b5cea8"/><rect x="28" y="64.4" width="2" height="1.3" fill="#d4d4d4"/><rect x="4" y="70.4" width="6" height="1.3" fill="#dcdcaa"/><rect x="10" y="70.4" width="1" height="1.3" fill="#d4d4d4"/><rect x="11" y="70.4" width="49" height="1.3" fill="#ce9178"/><rect x="60" y="70.4" width="1" height="1.3" fill="#d4d4d4"/><rect x="62" y="70.4" width="8" height="1.3" fill="#9cdcfe"/><rect x="70" y="70.4" width="1" height="1.3" fill="#d4d4d4"/><rect x="72" y="70.4" width="5" height="1.3" fill="#9cdcfe"/><rect x="77" y="70.4" width="1" height="1.3" fill="#d4d4d4"/><rect x="79" y="70.4" width="1" height="1.3" fill="#9cdcfe"/><rect x="4" y="72.4" width="6" height="1.3" fill="#dcdcaa"/><rect x="10" y="72.4" width="1" height="1.3" fill="#d4d4d4"/><rect x="11" y="72.4" width="5" height="1.3" fill="#9cdcfe"/><rect x="16" y="72.4" width="1" height="1.3" fill="#d4d4d4"/><rect x="18" y="72.4" width="1" height="1.3" fill="#b5cea8"/><rect x="19" y="72.4" width="1" height="1.3" fill="#d4d4d4"/><rect x="21" y="72.4" width="4" height="1.3" fill="#b5cea8"/><rect x="25" y="72.4" width="2" height="1.3" fill="#d4d4d4"/><rect x="4" y="74.4" width="6" height="1.3" fill="#c586c0"/><rect x="10" y="74.4" width="1" height="1.3" fill="#d4d4d4"/><rect x="0" y="76.4" width="1" height="1.3" fill="#d4d4d4"/><rect x="0" y="78.4" width="4" height="1.3" fill="#569cd6"/><rect x="5" y="78.4" width="10" height="1.3" fill="#dcdcaa"/><rect x="15" y="78.4" width="2" height="1.3" fill="#d4d4d4"/><rect x="0" y="80.4" width="1" height="1.3" fill="#d4d4d4"/><rect x="4" y="82.4" width="4" height="1.3" fill="#569cd6"/><rect x="9" y="82.4" width="4" height="1.3" fill="#9cdcfe"/><rect x="14" y="82.4" width="1" height="1.3" fill="#d4d4d4"/><rect x="16" y="82.4" width="1" height="1.3" fill="#b5cea8"/><rect x="17" y="82.4" width="1" height="1.3" fill="#d4d4d4"/><rect x="4" y="84.4" width="4" height="1.3" fill="#569cd6"/><rect x="9" y="84.4" width="4" height="1.3" fill="#9cdcfe"/><rect x="14" y="84.4" width="1" height="1.3" fill="#d4d4d4"/><rect x="16" y="84.4" width="1" height="1.3" fill="#b5cea8"/><rect x="17" y="84.4" width="1" height="1.3" fill="#d4d4d4"/><rect x="4" y="86.4" width="4" height="1.3" fill="#569cd6"/><rect x="9" y="86.4" width="4" height="1.3" fill="#9cdcfe"/><rect x="14" y="86.4" width="1" height="1.3" fill="#d4d4d4"/><rect x="16" y="86.4" width="1" height="1.3" fill="#b5cea8"/><rect x="17" y="86.4" width="1" height="1.3" fill="#d4d4d4"/><rect x="4" y="88.4" width="6" height="1.3" fill="#dcdcaa"/><rect x="10" y="88.4" width="1" height="1.3" fill="#d4d4d4"/><rect x="11" y="88.4" width="55" height="1.3" fill="#ce9178"/><rect x="66" y="88.4" width="1" height="1.3" fill="#d4d4d4"/><rect x="68" y="88.4" width="1" height="1.3" fill="#d4d4d4"/><rect x="69" y="88.4" width="4" height="1.3" fill="#9cdcfe"/><rect x="73" y="88.4" width="1" height="1.3" fill="#d4d4d4"/><rect x="75" y="88.4" width="1" height="1.3" fill="#d4d4d4"/><rect x="76" y="88.4" width="4" height="1.3" fill="#9cdcfe"/><rect x="4" y="90.4" width="6" height="1.3" fill="#c586c0"/><rect x="10" y="90.4" width="1" height="1.3" fill="#d4d4d4"/><rect x="0" y="92.4" width="1" height="1.3" fill="#d4d4d4"/><rect x="0" y="94.4" width="4" height="1.3" fill="#569cd6"/><rect x="5" y="94.4" width="10" height="1.3" fill="#dcdcaa"/><rect x="15" y="94.4" width="2" height="1.3" fill="#d4d4d4"/><rect x="0" y="96.4" width="1" height="1.3" fill="#d4d4d4"/><rect x="4" y="98.4" width="4" height="1.3" fill="#569cd6"/><rect x="9" y="98.4" width="4" height="1.3" fill="#9cdcfe"/><rect x="14" y="98.4" width="1" height="1.3" fill="#d4d4d4"/><rect x="16" y="98.4" width="1" height="1.3" fill="#b5cea8"/><rect x="17" y="98.4" width="1" height="1.3" fill="#d4d4d4"/><rect x="4" y="100.4" width="4" height="1.3" fill="#569cd6"/><rect x="9" y="100.4" width="4" height="1.3" fill="#9cdcfe"/><rect x="14" y="100.4" width="1" height="1.3" fill="#d4d4d4"/><rect x="16" y="100.4" width="1" height="1.3" fill="#b5cea8"/><rect x="17" y="100.4" width="1" height="1.3" fill="#d4d4d4"/><rect x="4" y="102.4" width="4" height="1.3" fill="#569cd6"/><rect x="9" y="102.4" width="4" height="1.3" fill="#9cdcfe"/><rect x="14" y="102.4" width="1" height="1.3" fill="#d4d4d4"/><rect x="16" y="102.4" width="1" height="1.3" fill="#b5cea8"/><rect x="17" y="102.4" width="1" height="1.3" fill="#d4d4d4"/><rect x="4" y="104.4" width="6" height="1.3" fill="#dcdcaa"/><rect x="10" y="104.4" width="1" height="1.3" fill="#d4d4d4"/><rect x="11" y="104.4" width="55" height="1.3" fill="#ce9178"/><rect x="66" y="104.4" width="1" height="1.3" fill="#d4d4d4"/><rect x="68" y="104.4" width="1" height="1.3" fill="#d4d4d4"/><rect x="69" y="104.4" width="4" height="1.3" fill="#9cdcfe"/><rect x="73" y="104.4" width="1" height="1.3" fill="#d4d4d4"/><rect x="75" y="104.4" width="1" height="1.3" fill="#d4d4d4"/><rect x="76" y="104.4" width="4" height="1.3" fill="#9cdcfe"/><rect x="4" y="106.4" width="10" height="1.3" fill="#dcdcaa"/><rect x="14" y="106.4" width="3" height="1.3" fill="#d4d4d4"/><rect x="4" y="108.4" width="6" height="1.3" fill="#c586c0"/><rect x="10" y="108.4" width="1" height="1.3" fill="#d4d4d4"/><rect x="0" y="110.4" width="1" height="1.3" fill="#d4d4d4"/><rect x="0" y="114.4" width="3" height="1.3" fill="#569cd6"/><rect x="4" y="114.4" width="4" height="1.3" fill="#dcdcaa"/><rect x="8" y="114.4" width="2" height="1.3" fill="#d4d4d4"/><rect x="0" y="116.4" width="1" height="1.3" fill="#d4d4d4"/><rect x="4" y="118.4" width="10" height="1.3" fill="#dcdcaa"/><rect x="14" y="118.4" width="3" height="1.3" fill="#d4d4d4"/><rect x="4" y="120.4" width="13" height="1.3" fill="#6a9955"/><rect x="4" y="122.4" width="3" height="1.3" fill="#dcdcaa"/><rect x="7" y="122.4" width="3" height="1.3" fill="#d4d4d4"/><rect x="4" y="124.4" width="6" height="1.3" fill="#c586c0"/><rect x="11" y="124.4" width="1" height="1.3" fill="#b5cea8"/><rect x="12" y="124.4" width="1" height="1.3" fill="#d4d4d4"/><rect x="0" y="126.4" width="1" height="1.3" fill="#d4d4d4"/></g></svg>
<svg style="left:1833px;top:131px" width="64" height="50" viewBox="0 0 64 50" ><rect x="0" y="0" width="64" height="2" fill="#264f78" opacity=".7"/><g fill="#d4d4d4" opacity=".42"><rect x="0" y="0.3" width="25" height="1.6"/><rect x="26" y="0.3" width="4" height="1.6"/><rect x="31" y="0.3" width="8" height="1.6"/><rect x="40" y="0.3" width="5" height="1.6"/><rect x="46" y="0.3" width="7" height="1.6"/><rect x="57" y="0.3" width="7" height="1.6"/><rect x="0" y="2.3" width="25" height="1.6"/><rect x="26" y="2.3" width="4" height="1.6"/><rect x="31" y="2.3" width="8" height="1.6"/><rect x="40" y="2.3" width="5" height="1.6"/><rect x="46" y="2.3" width="7" height="1.6"/><rect x="57" y="2.3" width="7" height="1.6"/><rect x="0" y="4.3" width="25" height="1.6"/><rect x="26" y="4.3" width="4" height="1.6"/><rect x="31" y="4.3" width="8" height="1.6"/><rect x="40" y="4.3" width="5" height="1.6"/><rect x="46" y="4.3" width="7" height="1.6"/><rect x="57" y="4.3" width="7" height="1.6"/><rect x="0" y="6.3" width="25" height="1.6"/><rect x="26" y="6.3" width="4" height="1.6"/><rect x="31" y="6.3" width="8" height="1.6"/><rect x="40" y="6.3" width="5" height="1.6"/><rect x="46" y="6.3" width="7" height="1.6"/><rect x="57" y="6.3" width="7" height="1.6"/><rect x="0" y="8.3" width="25" height="1.6"/><rect x="26" y="8.3" width="4" height="1.6"/><rect x="31" y="8.3" width="8" height="1.6"/><rect x="40" y="8.3" width="5" height="1.6"/><rect x="46" y="8.3" width="7" height="1.6"/><rect x="57" y="8.3" width="7" height="1.6"/><rect x="0" y="10.3" width="25" height="1.6"/><rect x="26" y="10.3" width="4" height="1.6"/><rect x="31" y="10.3" width="8" height="1.6"/><rect x="40" y="10.3" width="5" height="1.6"/><rect x="46" y="10.3" width="1" height="1.6"/><rect x="57" y="10.3" width="6" height="1.6"/><rect x="0" y="12.3" width="25" height="1.6"/><rect x="26" y="12.3" width="4" height="1.6"/><rect x="31" y="12.3" width="8" height="1.6"/><rect x="40" y="12.3" width="5" height="1.6"/><rect x="46" y="12.3" width="7" height="1.6"/><rect x="57" y="12.3" width="7" height="1.6"/><rect x="0" y="14.3" width="25" height="1.6"/><rect x="26" y="14.3" width="4" height="1.6"/><rect x="31" y="14.3" width="8" height="1.6"/><rect x="40" y="14.3" width="5" height="1.6"/><rect x="46" y="14.3" width="7" height="1.6"/><rect x="57" y="14.3" width="7" height="1.6"/><rect x="0" y="16.3" width="25" height="1.6"/><rect x="26" y="16.3" width="4" height="1.6"/><rect x="31" y="16.3" width="8" height="1.6"/><rect x="40" y="16.3" width="5" height="1.6"/><rect x="46" y="16.3" width="7" height="1.6"/><rect x="57" y="16.3" width="7" height="1.6"/><rect x="0" y="18.3" width="25" height="1.6"/><rect x="26" y="18.3" width="4" height="1.6"/><rect x="31" y="18.3" width="8" height="1.6"/><rect x="40" y="18.3" width="5" height="1.6"/><rect x="46" y="18.3" width="7" height="1.6"/><rect x="57" y="18.3" width="7" height="1.6"/><rect x="0" y="20.3" width="25" height="1.6"/><rect x="26" y="20.3" width="4" height="1.6"/><rect x="31" y="20.3" width="8" height="1.6"/><rect x="40" y="20.3" width="5" height="1.6"/><rect x="46" y="20.3" width="7" height="1.6"/><rect x="57" y="20.3" width="7" height="1.6"/><rect x="0" y="22.3" width="25" height="1.6"/><rect x="26" y="22.3" width="4" height="1.6"/><rect x="31" y="22.3" width="8" height="1.6"/><rect x="40" y="22.3" width="5" height="1.6"/><rect x="46" y="22.3" width="7" height="1.6"/><rect x="57" y="22.3" width="7" height="1.6"/><rect x="0" y="24.3" width="25" height="1.6"/><rect x="26" y="24.3" width="4" height="1.6"/><rect x="31" y="24.3" width="8" height="1.6"/><rect x="40" y="24.3" width="5" height="1.6"/><rect x="46" y="24.3" width="1" height="1.6"/><rect x="0" y="26.3" width="25" height="1.6"/><rect x="26" y="26.3" width="4" height="1.6"/><rect x="31" y="26.3" width="8" height="1.6"/><rect x="40" y="26.3" width="5" height="1.6"/><rect x="46" y="26.3" width="7" height="1.6"/><rect x="57" y="26.3" width="7" height="1.6"/><rect x="0" y="28.3" width="25" height="1.6"/><rect x="26" y="28.3" width="4" height="1.6"/><rect x="31" y="28.3" width="8" height="1.6"/><rect x="40" y="28.3" width="5" height="1.6"/><rect x="46" y="28.3" width="7" height="1.6"/><rect x="57" y="28.3" width="7" height="1.6"/><rect x="0" y="30.3" width="25" height="1.6"/><rect x="26" y="30.3" width="4" height="1.6"/><rect x="31" y="30.3" width="8" height="1.6"/><rect x="40" y="30.3" width="5" height="1.6"/><rect x="46" y="30.3" width="7" height="1.6"/><rect x="57" y="30.3" width="7" height="1.6"/><rect x="0" y="32.3" width="25" height="1.6"/><rect x="26" y="32.3" width="4" height="1.6"/><rect x="31" y="32.3" width="8" height="1.6"/><rect x="40" y="32.3" width="5" height="1.6"/><rect x="46" y="32.3" width="7" height="1.6"/><rect x="57" y="32.3" width="7" height="1.6"/><rect x="0" y="34.3" width="25" height="1.6"/><rect x="26" y="34.3" width="4" height="1.6"/><rect x="31" y="34.3" width="8" height="1.6"/><rect x="40" y="34.3" width="5" height="1.6"/><rect x="46" y="34.3" width="7" height="1.6"/><rect x="57" y="34.3" width="7" height="1.6"/><rect x="0" y="36.3" width="25" height="1.6"/><rect x="26" y="36.3" width="4" height="1.6"/><rect x="31" y="36.3" width="8" height="1.6"/><rect x="40" y="36.3" width="5" height="1.6"/><rect x="46" y="36.3" width="1" height="1.6"/><rect x="0" y="38.3" width="25" height="1.6"/><rect x="26" y="38.3" width="4" height="1.6"/><rect x="31" y="38.3" width="8" height="1.6"/><rect x="40" y="38.3" width="5" height="1.6"/><rect x="46" y="38.3" width="1" height="1.6"/><rect x="57" y="38.3" width="7" height="1.6"/></g></svg>
<div class="abs" style="left:392px;top:788px;width:1518px;height:218px;background:#1e1e1e;"></div>
<div class="abs" style="left:392px;top:788px;width:1518px;height:1px;background:#454545;"></div>
<div class="t " style="left:412px;top:796.00px;line-height:20px;font-size:10.7px;color:#8b8b8b;">输出</div>
<div class="t " style="left:457.5px;top:796.00px;line-height:20px;font-size:10.7px;color:#8b8b8b;">调试控制台</div>
<div class="t " style="left:535.7px;top:796.00px;line-height:20px;font-size:10.7px;color:#e7e7e7;">终端</div>
<div class="abs" style="left:533.7px;top:816.2px;width:25px;height:1px;background:#e7e7e7;"></div>
<svg style="left:1822px;top:797px" width="80" height="18" viewBox="0 0 80 18" fill="none" stroke="#c5c5c5" stroke-width="1.1"><path d="M8.5 2.5v13M2 9h13"/><path d="M21 7.500l3.500 3.500 3.500-3.500" stroke="#8f8f8f"/><path d="M43 11l4.700-4.700 4.700 4.700"/><path d="M65 4.500l8.500 8.500M73.500 4.500l-8.500 8.500"/></svg>
<div class="abs" style="left:1709.8px;top:822.5px;width:1px;height:183.5px;background:#444444;"></div>
<div class="abs" style="left:1710.8px;top:822.5px;width:199.2px;height:21.7px;background:#37373d;"></div>
<svg style="left:1722px;top:826.5px" width="14" height="14" viewBox="0 0 14 14" fill="none" stroke="#c5c5c5" stroke-width="1"><rect x=".5" y=".5" width="13" height="13" rx=".8"/><path d="M4.800 3.800l3.200 3.200-3.200 3.200"/></svg>
<div class="t " style="left:1740px;top:823.50px;line-height:20px;font-size:13px;color:#cccccc;letter-spacing:0.3px;">make</div>
<svg style="left:1722px;top:849px" width="14" height="14" viewBox="0 0 14 14" fill="none" stroke="#c5c5c5" stroke-width="1"><rect x=".5" y=".5" width="13" height="13" rx=".8"/><path d="M4.800 3.800l3.200 3.200-3.200 3.200"/></svg>
<div class="t " style="left:1740px;top:846.00px;line-height:20px;font-size:13px;color:#cccccc;letter-spacing:0.3px;">bash</div>
<div class="term" style="top:831.38px"><span class="g">lmos@lmos-PC</span>:<span class="b">~/<span class="k">计算机基础</span>/code/22</span>$ make</div>
<div class="term" style="top:847.23px">CC -[M] <span class="k">正在构建</span>... main.c</div>
<div class="term" style="top:863.08px">CC -[M] <span class="k">正在构建</span>... main.elf</div>
<div class="term" style="top:878.92px"><span class="g">lmos@lmos-PC</span>:<span class="b">~/<span class="k">计算机基础</span>/code/22</span>$ make run</div>
<div class="term" style="top:894.77px">stacktest1<span class="k">运行时</span>val1<span class="k">地址</span>:0x7fff738ffd38 val2<span class="k">地址</span>:0x7fff738ffd30 val3<span class="k">地址</span>:0x7fff738ffd28</div>
<div class="term" style="top:910.62px">stacktest2<span class="k">运行时</span>val1<span class="k">地址</span>:0x7fff738ffd08 val2<span class="k">地址</span>:0x7fff738ffd00 val3<span class="k">地址</span>:0x7fff738ffcf8</div>
<div class="term" style="top:926.48px">Text<span class="k">段</span>,<span class="k">程序运行时指令数据开始</span>:0x400000,<span class="k">结束</span>:0x4013ad</div>
<div class="term" style="top:942.33px">Data<span class="k">段</span>,<span class="k">程序运行时初始化全局变量和静态变量的数据开始</span>:0x4013ad,<span class="k">结束</span>:0x404058</div>
<div class="term" style="top:958.17px">Bss<span class="k">段</span>,<span class="k">程序运行时未初始化全局变量和静态变量的数据开始</span>:0x404058,<span class="k">结束</span>:0x404060</div>
<div class="term" style="top:974.02px">(pid:27668)<span class="k">应用程序正在运行</span>,<span class="k">请输入</span>:c,<span class="k">退出</span></div>
<div class="term" style="top:989.88px"><span class="k">请输入</span>:</div>
<div class="abs" style="left:467.44px;top:990.88px;width:7.92px;height:13.85px;border:1px solid #cccccc"></div>
<div class="abs" style="left:1227px;top:894px;width:8px;height:15px;background:#7f7f7f;"></div>
<div class="abs" style="left:395.3px;top:215px;width:766.4000000000001px;height:396.9px;border:2.4px solid #ee2450"></div>
<div class="abs" style="left:1228.5px;top:485.6px;width:609.7px;height:28.0px;border:2.4px solid #ee2450"></div>
<div class="abs" style="left:395.5px;top:892.5px;width:747.0px;height:37.0px;border:2.4px solid #ee2450"></div>
</body></html>
